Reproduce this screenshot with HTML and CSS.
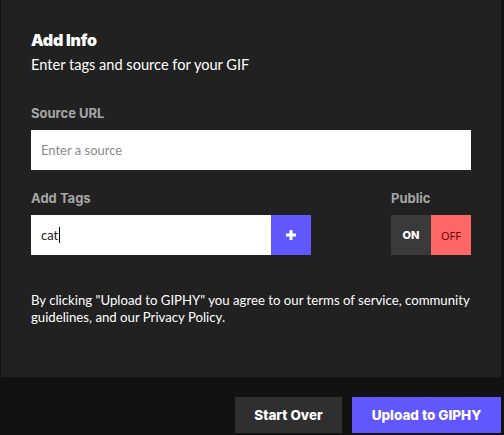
FILE: index.html
```html
<!DOCTYPE html>
<html>
<head>
<meta charset="utf-8">
<link rel="stylesheet" href="styles.css">
</head>
<body>
<div class="page">
  <section class="panel">
    <h1 class="title">Add Info</h1>
    <p class="subtitle">Enter tags and source for your GIF</p>

    <label class="label label-source">Source URL</label>
    <div class="input input-source"><span class="placeholder">Enter a source</span></div>

    <div class="row">
      <div class="tags">
        <label class="label">Add Tags</label>
        <div class="tag-field">
          <div class="input input-tags"><span class="value">cat</span><span class="caret"></span></div>
          <button class="plus" type="button">
            <svg width="12" height="12" viewBox="0 0 12 12"><path d="M6 1v10M1 6h10" stroke="#fff" stroke-width="3"/></svg>
          </button>
        </div>
      </div>
      <div class="public">
        <label class="label">Public</label>
        <div class="toggle">
          <span class="on">ON</span>
          <span class="off">OFF</span>
        </div>
      </div>
    </div>

    <p class="legal">By clicking "Upload to GIPHY" you agree to our terms of service, community guidelines, and our Privacy Policy.</p>
  </section>
  <div class="actions">
    <button class="btn btn-start" type="button">Start Over</button>
    <button class="btn btn-upload" type="button">Upload to GIPHY</button>
  </div>
</div>
</body>
</html>
```

FILE: styles.css
```css
html, body {
  margin: 0;
  padding: 0;
  background: #121212;
  width: 504px;
  height: 435px;
  overflow: hidden;
  font-family: Lato, "Liberation Sans", sans-serif;
}
.page {
  padding-left: 1px;
  width: 500px;
}
.panel {
  background: #212121;
  height: 377px;
  box-sizing: border-box;
  padding: 30px 30px 0 30px;
}
.title {
  margin: 0;
  font-family: Inter, sans-serif;
  font-weight: 900;
  font-size: 16px;
  line-height: 20px;
  color: #fff;
  letter-spacing: -0.2px;
}
.subtitle {
  margin: 5px 0 0;
  font-size: 14.6px;
  line-height: 20px;
  color: #fff;
}
.label {
  display: block;
  font-family: Inter, sans-serif;
  font-weight: 700;
  font-size: 13px;
  line-height: 16px;
  color: #a6a6a6;
}
.label-source {
  margin-top: 30px;
  margin-bottom: 9px;
}
.input {
  background: #fff;
  height: 40px;
  box-sizing: border-box;
  display: flex;
  align-items: center;
  padding-left: 10px;
  font-size: 13px;
}
.placeholder { color: #8a8a8a; }
.row {
  margin-top: 20px;
  display: flex;
  justify-content: space-between;
}
.row .label { margin-bottom: 9px; }
.tag-field {
  display: flex;
  width: 280px;
}
.input-tags {
  flex: 1;
  color: #222;
}
.caret {
  width: 1px;
  height: 16px;
  background: #000;
  margin-left: 1px;
}
.plus {
  width: 40px;
  height: 40px;
  border: 0;
  padding: 0;
  background: #6157ff;
  display: flex;
  align-items: center;
  justify-content: center;
}
.public { width: 80px; }
.toggle {
  display: flex;
  height: 40px;
}
.toggle span {
  flex: 1;
  display: flex;
  align-items: center;
  justify-content: center;
  font-size: 11px;
}
.on {
  background: #3a3a3a;
  color: #fff;
  font-family: Inter, sans-serif;
  font-weight: 800;
}
.off {
  background: #ff6666;
  color: #6b0a0a;
  font-family: "Noto Sans", sans-serif;
  font-size: 11.5px;
}
.legal {
  margin: 37px 0 0;
  font-size: 13.2px;
  line-height: 17px;
  color: #fff;
}
.actions {
  display: flex;
  justify-content: flex-end;
  gap: 10px;
  padding-top: 20px;
}
.btn {
  height: 36px;
  border: 0;
  padding: 0;
  font-family: Inter, sans-serif;
  font-weight: 800;
  font-size: 13.5px;
  color: #fff;
}
.btn-start {
  width: 107px;
  background: #2f2f2f;
}
.btn-upload {
  width: 149px;
  background: #6157ff;
}
```
